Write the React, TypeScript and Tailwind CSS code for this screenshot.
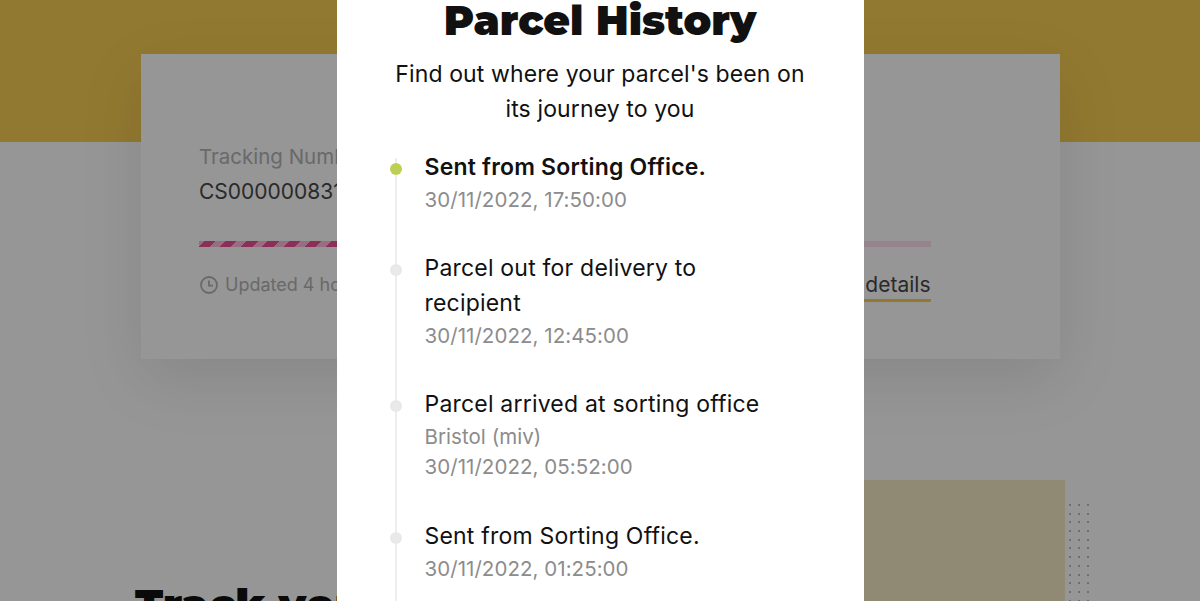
const inter = "font-['Inter',sans-serif]";

type Ev = { title: string; bold?: boolean; place?: string; date: string; active?: boolean };

const events: Ev[] = [
  { title: "Sent from Sorting Office.", bold: true, date: "30/11/2022, 17:50:00", active: true },
  { title: "Parcel out for delivery to recipient", date: "30/11/2022, 12:45:00" },
  { title: "Parcel arrived at sorting office", place: "Bristol (miv)", date: "30/11/2022, 05:52:00" },
  { title: "Sent from Sorting Office.", date: "30/11/2022, 01:25:00" },
];

function Background() {
  return (
    <div className={`h-[601px] overflow-hidden bg-[#fafafa] ${inter}`}>
      <div className="h-[142px] bg-[#f3ca52]" />
      <div className="mx-auto -mt-[88px] flex h-[305px] w-[919px] flex-col bg-[#fafafa] pl-[58.5px] pr-[129px] pt-[91px] shadow-[0_20px_60px_rgba(0,0,0,0.1)]">
        <div className="text-[20.5px] leading-[24px] text-[#b0b0b0]">Tracking Number</div>
        <div className="mt-[11px] text-[21px] leading-[24px] text-[#474747]">CS0000008310</div>
        <div className="mt-[37px] h-[6px] w-full bg-[#fadbe8]">
          <div className="h-full w-1/3 bg-[repeating-linear-gradient(-45deg,#e84f93_0,#e84f93_8px,#fbb8d4_8px,#fbb8d4_15px)]" />
        </div>
        <div className="mt-[26px] flex items-start justify-between">
          <div className="ml-[1px] mt-[1px] flex items-center gap-[7px] text-[18px] leading-[22px] text-[#b0b0b0]">
            <svg width="18" height="18" viewBox="0 0 18 18" fill="none" stroke="#b0b0b0" strokeWidth="1.8">
              <circle cx="9" cy="9" r="8" />
              <path d="M9 4.6V9.6H13" />
            </svg>
            Updated 4 hours ago
          </div>
          <div className="border-b-[3px] border-[#f3ca52] pb-[2px] text-[21px] leading-[24px] text-[#474747]">View details</div>
        </div>
      </div>
      <div className="flex justify-between pl-[135px] pr-[108px]">
        <div className="mt-[216px] whitespace-nowrap font-['Montserrat','Liberation_Sans',sans-serif] text-[43px] font-black leading-[60px] text-[#111]">
          Track your parcel
        </div>
        <div className="mt-[121px] flex">
          <div className="h-[300px] w-[305px] bg-[#f0e6c3]" />
          <div className="mt-[24px] grid grid-cols-[repeat(3,9px)] content-start gap-y-[6.7px]">
            {Array.from({ length: 36 }).map((_, i) => (
              <div key={i} className="h-[2px] w-[2px] translate-x-[4px] rounded-full bg-[#a0a0a0]" />
            ))}
          </div>
        </div>
      </div>
    </div>
  );
}

function Modal() {
  return (
    <div className={`absolute inset-y-0 left-[336.5px] w-[527px] overflow-hidden bg-white ${inter}`}>
      <div className="-mt-[6px] text-center font-['Montserrat','Liberation_Sans',sans-serif] text-[41px] font-black leading-[52px] text-[#111]">
        Parcel History
      </div>
      <p className="mx-auto mt-[11px] w-[430px] text-center text-[23px] leading-[35px] tracking-[0.12px] text-[#111]">
        Find out where your parcel's been on its journey to you
      </p>
      <div className="relative ml-[53.5px] mt-[23px] flex flex-col gap-[36.2px]">
        <div className="absolute left-[5px] top-[8px] h-[600px] w-[2px] bg-[#eeeeee]" />
        {events.map((e, i) => (
          <div key={i} className="relative flex gap-[22.5px]">
            <div className={`mt-[13px] h-[12px] w-[12px] shrink-0 rounded-full ${e.active ? "bg-[#bed053]" : "bg-[#e9e9e9]"}`} />
            <div className="w-[345px]">
              <div className={`text-[23px] leading-[35px] tracking-[0.2px] text-[#111] ${e.bold ? "font-semibold" : ""}`}>{e.title}</div>
              {e.place && <div className="text-[20.5px] leading-[30px] tracking-[0.05px] text-[#8c8c8c]">{e.place}</div>}
              <div className="text-[20.5px] leading-[30px] tracking-[0.05px] text-[#8c8c8c]">{e.date}</div>
            </div>
          </div>
        ))}
      </div>
    </div>
  );
}

export default function App() {
  return (
    <div className="relative h-[601px] w-[1200px] overflow-hidden">
      <Background />
      <div className="absolute inset-0 bg-black/40" />
      <Modal />
    </div>
  );
}
